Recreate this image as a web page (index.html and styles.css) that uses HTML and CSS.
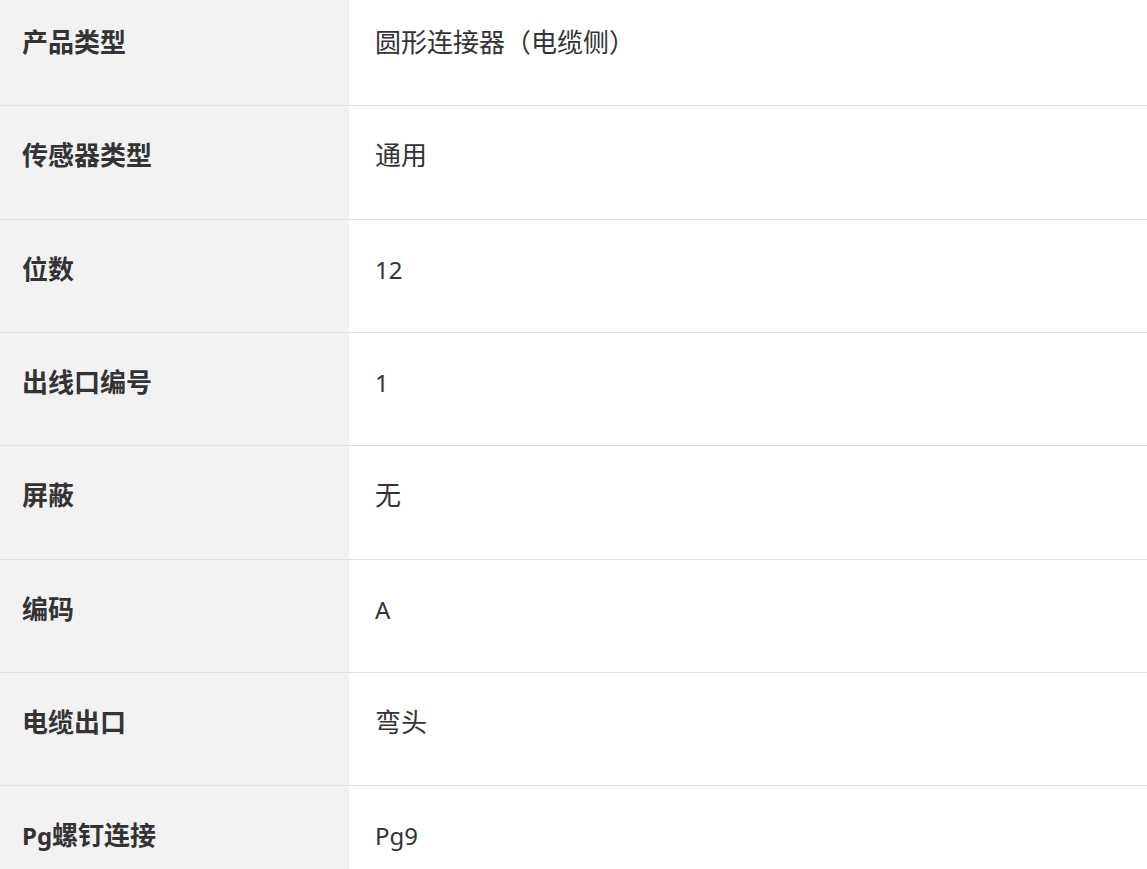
FILE: index.html
```html
<!DOCTYPE html>
<html lang="zh-CN">
<head>
<meta charset="utf-8">
<title>产品参数</title>
<link rel="stylesheet" href="styles.css">
</head>
<body>
<div class="specs">
  <div class="row"><div class="label">产品类型</div><div class="value">圆形连接器（电缆侧）</div></div>
  <div class="row"><div class="label">传感器类型</div><div class="value">通用</div></div>
  <div class="row"><div class="label">位数</div><div class="value"><span class="lat">12</span></div></div>
  <div class="row"><div class="label">出线口编号</div><div class="value"><span class="lat">1</span></div></div>
  <div class="row"><div class="label">屏蔽</div><div class="value">无</div></div>
  <div class="row"><div class="label">编码</div><div class="value"><span class="lat">A</span></div></div>
  <div class="row"><div class="label">电缆出口</div><div class="value">弯头</div></div>
  <div class="row"><div class="label"><span class="lat">Pg</span>螺钉连接</div><div class="value"><span class="lat">Pg9</span></div></div>
</div>
</body>
</html>
```

FILE: styles.css
```css
html, body {
  margin: 0;
  padding: 0;
  background: #ffffff;
}

body {
  width: 1147px;
  height: 869px;
  overflow: hidden;
  font-family: "Noto Sans CJK SC", "Noto Sans", sans-serif;
  color: #333333;
}

.specs {
  margin-top: -8px;
  display: flex;
  flex-direction: column;
}

.row {
  display: grid;
  grid-template-columns: 349px 1fr;
  height: 113.34px;
  box-sizing: border-box;
  border-top: 1px solid #e1e1e1;
}

.label,
.value {
  font-size: 26px;
  line-height: 36px;
  padding-top: 30px;
  box-sizing: border-box;
}

.label {
  background: #f2f2f2;
  font-weight: 700;
  padding-left: 22px;
}

.value {
  background: #ffffff;
  font-weight: 400;
  padding-left: 26px;
}

.lat {
  font-family: "Noto Sans", "Noto Sans CJK SC", sans-serif;
  font-size: 24px;
}
```
